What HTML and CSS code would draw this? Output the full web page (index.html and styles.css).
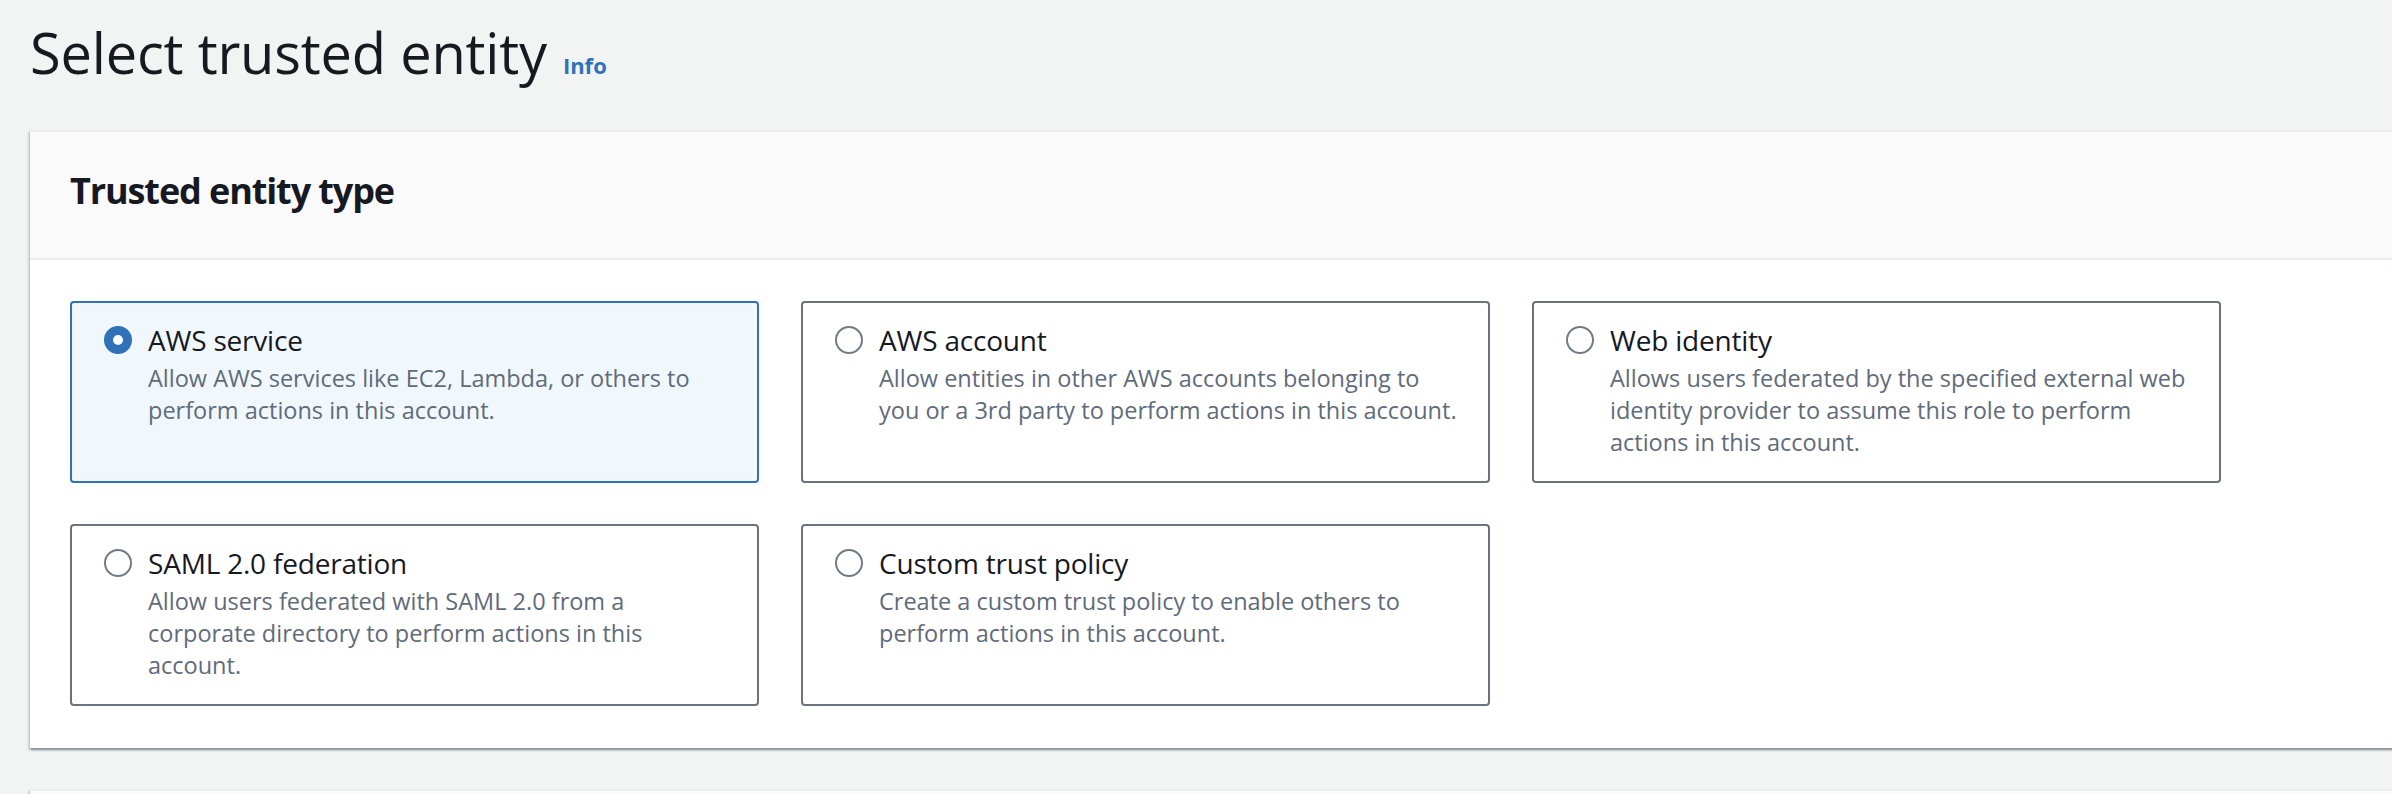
FILE: index.html
```html
<!DOCTYPE html>
<html lang="en">
<head>
<meta charset="utf-8">
<title>Select trusted entity</title>
<link rel="stylesheet" href="styles.css">
</head>
<body>
<main class="page">
  <div class="page-header">
    <h1 class="page-title">Select trusted entity</h1>
    <a class="info-link" href="#">Info</a>
  </div>

  <section class="container">
    <div class="container-header">
      <h2 class="container-title">Trusted entity type</h2>
    </div>
    <div class="container-body">
      <div class="tiles">
        <label class="tile tile--selected">
          <span class="radio radio--checked"></span>
          <span class="tile-text">
            <span class="tile-label">AWS service</span>
            <span class="tile-desc">Allow AWS services like EC2, Lambda, or others to perform actions in this account.</span>
          </span>
        </label>
        <label class="tile">
          <span class="radio"></span>
          <span class="tile-text">
            <span class="tile-label">AWS account</span>
            <span class="tile-desc">Allow entities in other AWS accounts belonging to you or a 3rd party to perform actions in this account.</span>
          </span>
        </label>
        <label class="tile">
          <span class="radio"></span>
          <span class="tile-text">
            <span class="tile-label">Web identity</span>
            <span class="tile-desc">Allows users federated by the specified external web identity provider to assume this role to perform actions in this account.</span>
          </span>
        </label>
        <label class="tile">
          <span class="radio"></span>
          <span class="tile-text">
            <span class="tile-label">SAML 2.0 federation</span>
            <span class="tile-desc">Allow users federated with SAML 2.0 from a corporate directory to perform actions in this account.</span>
          </span>
        </label>
        <label class="tile">
          <span class="radio"></span>
          <span class="tile-text">
            <span class="tile-label">Custom trust policy</span>
            <span class="tile-desc">Create a custom trust policy to enable others to perform actions in this account.</span>
          </span>
        </label>
      </div>
    </div>
  </section>

  <section class="container container--next">
    <div class="container-header"></div>
  </section>
</main>
</body>
</html>
```

FILE: styles.css
```css
* {
  box-sizing: border-box;
}

html, body {
  margin: 0;
  padding: 0;
}

body {
  background: #f2f3f3;
  font-family: "Open Sans", "Noto Sans", "Liberation Sans", sans-serif;
  color: #16191f;
  overflow: hidden;
}

.page {
  padding: 16px 0 0 30px;
}

.page-header {
  display: flex;
  align-items: baseline;
}

.page-title {
  margin: 0;
  font-size: 56px;
  line-height: 72px;
  font-weight: 400;
  letter-spacing: -0.2px;
  color: #16191f;
}

.info-link {
  margin-left: 16px;
  font-size: 22px;
  font-weight: 700;
  color: #2f72b8;
  text-decoration: none;
}

.container {
  margin-top: 42px;
  margin-right: -20px;
  background: #ffffff;
  box-shadow: 0 2px 2px rgba(0, 28, 36, 0.3), 2px 2px 2px rgba(0, 28, 36, 0.12), -2px 2px 2px rgba(0, 28, 36, 0.12);
}

.container-header {
  background: #fafafa;
  border-top: 2px solid #eaeded;
  border-bottom: 2px solid #eaeded;
  padding: 37px 40px 45px 40px;
}

.container-title {
  margin: 0;
  font-size: 36px;
  line-height: 44px;
  font-weight: 700;
  letter-spacing: -1.1px;
  color: #16191f;
}

.container-body {
  padding: 41px 40px 42px 40px;
}

.tiles {
  display: grid;
  grid-template-columns: repeat(3, 689px);
  column-gap: 42px;
  row-gap: 41px;
}

.tile {
  display: flex;
  gap: 16px;
  border: 2px solid #6b737c;
  border-radius: 4px;
  padding: 15px 23px 23px 32px;
  background: #ffffff;
  cursor: pointer;
}

.tile--selected {
  border-color: #2f72b8;
  background: #f1f8fd;
}

.radio {
  flex: none;
  width: 28px;
  height: 28px;
  margin-top: 8px;
  border-radius: 50%;
  border: 2px solid #717b86;
  background: #ffffff;
}

.radio--checked {
  border: 9px solid #2f72b8;
}

.tile-text {
  display: flex;
  flex-direction: column;
  min-width: 0;
}

.tile-label {
  font-size: 28px;
  line-height: 44px;
  letter-spacing: -0.2px;
  color: #16191f;
}

.tile-desc {
  font-size: 23.5px;
  line-height: 32px;
  color: #5f6b7a;
}

.container--next {
  margin-top: 41px;
}

.container--next .container-header {
  height: 120px;
  border-bottom: none;
}
```
